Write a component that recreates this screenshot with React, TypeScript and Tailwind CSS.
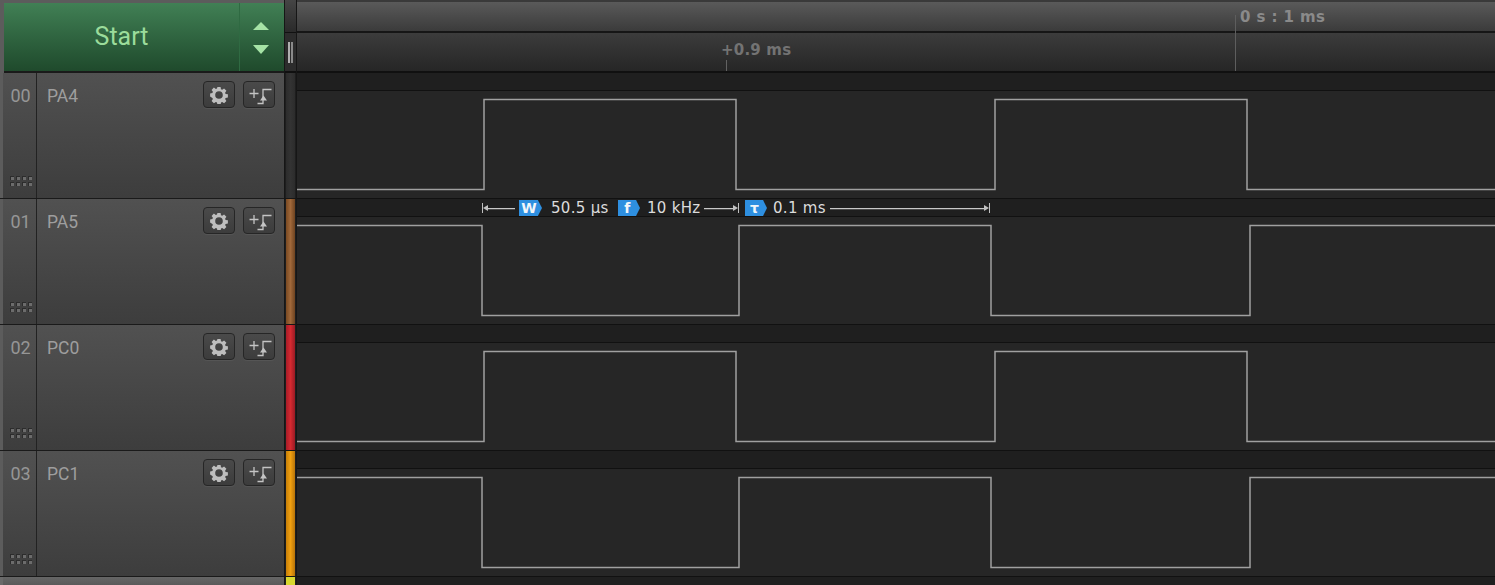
const WAVE_WIDTH = 1198;
const ORIGIN = 297;

const channels = [
  {
    id: "00",
    name: "PA4",
    strip: "bg-gradient-to-r from-[#2c2c2c] via-[#333333] to-[#2c2c2c]",
    startHigh: false,
    edges: [484, 736, 995, 1247],
  },
  {
    id: "01",
    name: "PA5",
    strip: "bg-gradient-to-r from-[#7a4a22] via-[#a0683a] to-[#6e4320]",
    startHigh: true,
    edges: [482, 739, 991, 1250],
  },
  {
    id: "02",
    name: "PC0",
    strip: "bg-gradient-to-r from-[#a81c28] via-[#d42a30] to-[#9a1a24]",
    startHigh: false,
    edges: [484, 736, 995, 1247],
  },
  {
    id: "03",
    name: "PC1",
    strip: "bg-gradient-to-r from-[#c77f08] via-[#f0a010] to-[#b87408]",
    startHigh: true,
    edges: [482, 739, 991, 1250],
  },
];

function wavePath(startHigh: boolean, edges: number[]) {
  const HIGH = 8.5;
  const LOW = 98.5;
  let level = startHigh;
  let d = `M0 ${level ? HIGH : LOW}`;
  for (const edge of edges) {
    const x = edge - ORIGIN;
    d += ` H${x}`;
    level = !level;
    d += ` V${level ? HIGH : LOW}`;
  }
  d += ` H${WAVE_WIDTH}`;
  return d;
}

function GearIcon() {
  return (
    <svg width="18" height="18" viewBox="0 0 18 18" aria-hidden>
      <path
        fill="#bebebe"
        fillRule="evenodd"
        d="M7.4 1h3.2l.4 2.3 1.2.5 1.9-1.3 2.3 2.3-1.3 1.9.5 1.2 2.3.4v3.2l-2.3.4-.5 1.2 1.3 1.9-2.3 2.3-1.9-1.3-1.2.5-.4 2.3H7.4l-.4-2.3-1.2-.5-1.9 1.3-2.3-2.3 1.3-1.9-.5-1.2L.1 10.6V7.4l2.3-.4.5-1.2-1.3-1.9 2.3-2.3 1.9 1.3 1.2-.5zM9 5.2a3.8 3.8 0 1 0 0 7.6 3.8 3.8 0 0 0 0-7.6z"
      />
    </svg>
  );
}

function TriggerIcon() {
  return (
    <svg width="26" height="20" viewBox="0 0 26 20" fill="none" aria-hidden>
      <path d="M8 4v9M3.5 8.5h9" stroke="#c4c4c4" strokeWidth="1.3" />
      <path d="M11.5 18.5H17V4.5h8.5" stroke="#c4c4c4" strokeWidth="1.3" />
      <path d="M14 15.5h7l-3.5-5z" fill="#c4c4c4" />
    </svg>
  );
}

function IconButton({ children }: { children: React.ReactNode }) {
  return (
    <div className="flex h-[27px] w-[32px] items-center justify-center rounded-[4px] border border-[#262626] bg-gradient-to-b from-[#4a4a4a] to-[#3c3c3c] shadow-[0_1px_0_#555555]">
      {children}
    </div>
  );
}

function GripDots() {
  return (
    <div className="grid w-[22px] grid-cols-4 gap-[2px]">
      {Array.from({ length: 8 }).map((_, i) => (
        <span key={i} className="h-[4px] w-[4px] bg-[#6c6c6c] shadow-[inset_1px_1px_0_#2c2c2c]" />
      ))}
    </div>
  );
}

function ChannelLabel({ id, name }: { id: string; name: string }) {
  return (
    <div className="flex h-full w-[284px] shrink-0 border-b border-b-[#1a1a1a] bg-[#5c5c5c] pl-[3px]">
      <div className="flex w-[34px] shrink-0 flex-col items-center border-r border-r-[#222222] bg-gradient-to-b from-[#515151] to-[#3d3d3d] pb-[12px] pl-[2px] pt-[13px]">
        <span className="text-[18px] leading-5 text-[#969696]">{id}</span>
        <div className="mt-auto">
          <GripDots />
        </div>
      </div>
      <div className="flex min-w-0 flex-1 items-start justify-between bg-gradient-to-b from-[#515151] to-[#3d3d3d] pl-[10px] pr-[9px] pt-[8px]">
        <span className="pt-[5px] text-[17.5px] leading-5 text-[#9e9e9e]">{name}</span>
        <div className="flex gap-[8px]">
          <IconButton>
            <GearIcon />
          </IconButton>
          <IconButton>
            <TriggerIcon />
          </IconButton>
        </div>
      </div>
    </div>
  );
}

function Tag({ label, width }: { label: string; width: string }) {
  return (
    <span
      className={`flex h-4 shrink-0 items-center justify-center bg-[#2e8fe0] pr-[3px] text-[14px] font-bold leading-none text-[#f2f6fa] [clip-path:polygon(0_0,82%_0,100%_50%,82%_100%,0_100%)] ${width}`}
    >
      {label}
    </span>
  );
}

function Measurement() {
  const rule = "h-px bg-[#c8c8c8] shadow-[0_1px_0_#4a4a4a]";
  const cap = "h-[10px] w-px shrink-0 bg-[#c0c0c0]";
  return (
    <div className="absolute left-[185px] top-[1px] flex h-4 w-[508px] items-center whitespace-nowrap font-['DejaVu_Sans',sans-serif] text-[15px] tracking-[0.3px] text-[#dcdcdc]">
      <span className={cap} />
      <span className="h-0 w-0 border-y-[3px] border-r-[5px] border-y-transparent border-r-[#c0c0c0]" />
      <span className={`${rule} w-[27px]`} />
      <Tag label="W" width="ml-[4px] w-[23px]" />
      <span className="ml-[9px] w-[67px]">50.5 µs</span>
      <Tag label="f" width="w-[22px]" />
      <span className="ml-[7px] w-[57px]">10 kHz</span>
      <span className={`${rule} w-[29px]`} />
      <span className="h-0 w-0 border-y-[3px] border-l-[5px] border-y-transparent border-l-[#c0c0c0]" />
      <span className={cap} />
      <Tag label="τ" width="ml-[6px] w-[22px]" />
      <span className="ml-[6px] w-[57px]">0.1 ms</span>
      <span className={`${rule} flex-1`} />
      <span className="h-0 w-0 border-y-[3px] border-l-[5px] border-y-transparent border-l-[#c0c0c0]" />
      <span className={cap} />
    </div>
  );
}

function Channel({ channel, measured }: { channel: (typeof channels)[number]; measured: boolean }) {
  return (
    <div className="flex h-[126px] shrink-0">
      <ChannelLabel id={channel.id} name={channel.name} />
      <div className="flex w-[13px] shrink-0 justify-center border-x border-b border-x-[#161616] border-b-[#161616] bg-[#1e1e1e] px-px">
        <div className={`w-[10px] ${channel.strip}`} />
      </div>
      <div className="flex min-w-0 flex-1 flex-col">
        <div className="relative h-[18px] shrink-0 border-b border-b-[#111111] bg-[#1f1f1f]">
          {measured && <Measurement />}
        </div>
        <div className="min-h-0 flex-1 border-b border-b-[#111111] bg-[#262626]">
          <svg width={WAVE_WIDTH} height="107" className="block" aria-hidden>
            <path
              d={wavePath(channel.startHigh, channel.edges)}
              fill="none"
              stroke="#a0a0a0"
              strokeWidth="1.5"
            />
          </svg>
        </div>
      </div>
    </div>
  );
}

function Header() {
  return (
    <div className="flex h-[73px] shrink-0">
      <div className="flex w-[284px] shrink-0 bg-[#5c5c5c] pl-[4px] pt-[3px]">
        <div className="flex flex-1 border-b-2 border-b-[#1a1a1a] bg-gradient-to-b from-[#418055] to-[#1f4a2c]">
          <div className="flex flex-1 items-center justify-center pb-[1px] text-[25px] text-[#9bdc9b]">
            Start
          </div>
          <div className="flex w-[45px] shrink-0 flex-col items-center justify-center gap-[15px] border-l border-l-[#2f6a42] pr-[2px] pt-[1px]">
            <span className="h-0 w-0 border-x-[8px] border-b-[8px] border-x-transparent border-b-[#a6e3a6]" />
            <span className="h-0 w-0 border-x-[8px] border-t-[9px] border-x-transparent border-t-[#a6e3a6]" />
          </div>
        </div>
      </div>
      <div className="flex w-[13px] shrink-0 flex-col border-x border-x-[#161616] bg-[#303030]">
        <div className="h-[33px] border-b border-b-[#111111] bg-gradient-to-b from-[#454545] to-[#2a2a2a]" />
        <div className="flex flex-1 justify-center border-b-2 border-b-[#101010] bg-[#2c2c2c] pt-[9px]">
          <div className="flex h-[21px] gap-px">
            <span className="w-[2px] bg-[#b0b0b0]" />
            <span className="w-[2px] bg-[#8a8a8a]" />
          </div>
        </div>
      </div>
      <div className="relative flex min-w-0 flex-1 flex-col font-['DejaVu_Sans',sans-serif] text-[15px] font-bold leading-5">
        <div className="h-[33px] border-y-2 border-b-[#161616] border-t-[#3a3a3a] bg-gradient-to-b from-[#5a5a5a] to-[#3b3b3b]" />
        <div className="flex-1 border-b-2 border-b-[#101010] bg-gradient-to-b from-[#3c3c3c] to-[#262626]" />
        <span className="absolute left-[938px] top-[15px] h-[56px] w-px bg-[#5e5e5e]" />
        <span className="absolute left-[429px] top-[60px] h-[11px] w-px bg-[#626262]" />
        <span className="absolute left-[943px] top-[7px] whitespace-nowrap tracking-[0.4px] text-[#8a8a8a]">0 s : 1 ms</span>
        <span className="absolute left-[424px] top-[40px] whitespace-nowrap tracking-[0.2px] text-[#737373]">+0.9 ms</span>
      </div>
    </div>
  );
}

export default function App() {
  return (
    <div className="flex h-[585px] w-[1495px] flex-col overflow-hidden bg-[#262626] font-['Roboto','Liberation_Sans',sans-serif]">
      <Header />
      {channels.map((channel) => (
        <Channel key={channel.id} channel={channel} measured={channel.id === "01"} />
      ))}
      <div className="flex min-h-0 flex-1">
        <div className="w-[284px] shrink-0 bg-[#6a6a6a] pl-[3px]">
          <div className="h-full bg-gradient-to-b from-[#666666] to-[#5a5a5a]" />
        </div>
        <div className="flex w-[13px] shrink-0 justify-center border-x border-x-[#161616] bg-[#1e1e1e] px-px">
          <div className="w-[10px] bg-[#d8d830]" />
        </div>
        <div className="flex-1 bg-[#1f1f1f]" />
      </div>
    </div>
  );
}
